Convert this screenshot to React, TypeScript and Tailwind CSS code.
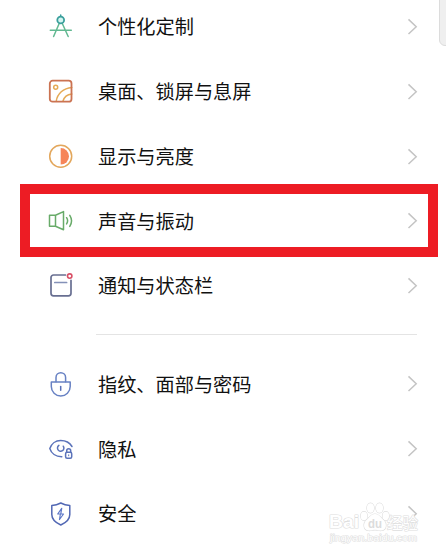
import React from "react";

interface SettingItem {
  label: string;
  icon: React.ReactNode;
  highlighted?: boolean;
}

const Icon = ({ children }: { children: React.ReactNode }) => (
  <svg
    viewBox="0 0 26 26"
    fill="none"
    strokeWidth="1.5"
    strokeLinecap="round"
    strokeLinejoin="round"
    className="h-[26px] w-[26px] shrink-0"
  >
    {children}
  </svg>
);

const CompassIcon = () => (
  <Icon>
    <path d="M11.2 9.5 5.6 22.5M14.3 9.5l5.9 13M2.3 16.3h21" stroke="#62b992" />
    <path d="M12.7 1v1.4" stroke="#3a9f9c" />
    <circle cx="12.7" cy="6" r="3.4" stroke="#3a9f9c" strokeWidth="1.8" fill="#d5f5f1" />
  </Icon>
);

const WallpaperIcon = () => (
  <Icon>
    <circle cx="7.7" cy="8.2" r="2" stroke="#e5aa55" />
    <path d="M8.3 22c1-7 7-13 15.5-13.6M15 22c1-3.6 4.5-6.5 8.8-7" stroke="#e5aa55" />
    <rect x="1.8" y="1.7" width="21.7" height="21" rx="2.8" stroke="#cb7352" strokeWidth="1.8" />
  </Icon>
);

const BrightnessIcon = () => (
  <Icon>
    <circle cx="12.7" cy="12.3" r="11" stroke="#e3a75c" />
    <path d="M12.7 4a8.3 8.3 0 0 1 0 16.6z" fill="#f68559" />
  </Icon>
);

const SoundIcon = () => (
  <Icon>
    <path d="M7.5 7.3h-6v10.9h6M7.5 7.3v10.9l8 3.5V3.6z" stroke="#68ab69" />
    <path d="M18.6 9.7c1.3 2 1.3 4.2 0 6.2M21.8 7.3c2.1 3.3 2.1 7.8 0 11.1" stroke="#68ab69" />
  </Icon>
);

const NotificationIcon = () => (
  <Icon>
    <path
      d="M17.5 2h-12A2.5 2.5 0 0 0 3 4.5v15.8a2.5 2.5 0 0 0 2.5 2.5h15a2.5 2.5 0 0 0 2.5-2.5v-13"
      stroke="#686f91"
      strokeWidth="1.7"
    />
    <path d="M6.8 9.5h11.8" stroke="#8491b8" strokeWidth="1.7" />
    <circle cx="21.7" cy="3.1" r="2.2" stroke="#d94f66" strokeWidth="1.6" />
  </Icon>
);

const LockIcon = () => (
  <Icon>
    <path d="M8 10.8V6.5a4.8 4.8 0 0 1 9.6 0v4.3" stroke="#6781c3" />
    <path d="M3.3 11h18.9v4.6a9.45 9.45 0 0 1-18.9 0z" stroke="#6781c3" />
    <path d="M12.7 15.5v3.7" stroke="#5870b8" />
  </Icon>
);

const PrivacyIcon = () => (
  <Icon>
    <path d="M24 10.5C21.8 6.8 17.5 4.5 12.7 4.5 7.5 4.5 3.3 8 1.8 12.5c1.5 4.8 6 8.3 12 8.2" stroke="#5b73ba" />
    <path d="M15.3 10.2a3.2 3.2 0 1 1-4.4-.8" stroke="#5b73ba" />
    <path d="M18.7 16.2v-1.5a2 2 0 0 1 4 0v1.5" stroke="#5b73ba" />
    <rect x="17.6" y="16.3" width="6.1" height="6" rx="1.5" stroke="#5b73ba" />
    <path d="M20.7 18.8v1" stroke="#5b73ba" strokeWidth="1" />
  </Icon>
);

const SecurityIcon = () => (
  <Icon>
    <path
      d="M12.8 2c2.8 1.5 5.7 2.3 9 2.5v9c0 5-4.5 8.500-9 10.500-4.500-2-9-5.500-9-10.500v-9c3.300-.2 6.200-1 9-2.500z"
      stroke="#5268b4"
    />
    <path d="M13.7 7.3 9.7 13h5.8l-4 5.5M13.7 7.3l-.9 5.5M12.4 13l-.9 5.5" stroke="#5e78c8" strokeWidth="1.2" />
  </Icon>
);

const Chevron = () => (
  <svg viewBox="0 0 11 18" fill="none" className="h-[18px] w-[11px]">
    <path d="m1.5 1.4 7.7 7.3-7.7 7.3" stroke="#c4c4c4" strokeWidth="1.5" />
  </svg>
);

const generalItems: SettingItem[] = [
  { label: "个性化定制", icon: <CompassIcon /> },
  { label: "桌面、锁屏与息屏", icon: <WallpaperIcon /> },
  { label: "显示与亮度", icon: <BrightnessIcon /> },
  { label: "声音与振动", icon: <SoundIcon />, highlighted: true },
  { label: "通知与状态栏", icon: <NotificationIcon /> },
];

const securityItems: SettingItem[] = [
  { label: "指纹、面部与密码", icon: <LockIcon /> },
  { label: "隐私", icon: <PrivacyIcon /> },
  { label: "安全", icon: <SecurityIcon /> },
];

const SettingRow = ({ label, icon, highlighted }: SettingItem) => (
  <li className="relative flex h-[64.75px] items-center pr-[28px] pl-12">
    {icon}
    <span className="ml-6 flex-1 text-[19.2px] leading-none text-[#111]">{label}</span>
    <Chevron />
    {highlighted && (
      <div className="absolute -top-[5px] right-2 left-5 h-[73px] border-[10px] border-[#ed1c24]" />
    )}
  </li>
);

const Watermark = () => (
  <svg
    viewBox="0 0 100 48"
    className="absolute top-[499px] left-[327px] h-12 w-[100px]"
    fill="#fff"
    stroke="#dedede"
    strokeWidth="1.2"
    strokeLinejoin="round"
    paintOrder="stroke"
    fontFamily='"Liberation Sans", "Noto Sans CJK SC", sans-serif'
  >
    <text x="2" y="29" fontSize="18" fontWeight="700" textLength="30" lengthAdjust="spacingAndGlyphs">
      Bai
    </text>
    <ellipse cx="37" cy="17" rx="3.3" ry="4.3" />
    <ellipse cx="43.5" cy="9" rx="3.6" ry="4.8" />
    <ellipse cx="52.5" cy="9" rx="3.6" ry="4.8" />
    <ellipse cx="58.8" cy="17" rx="3.3" ry="4.3" />
    <path d="M48 15c4 0 5.5 3.5 8.5 6 3.5 3 3.5 10-2 10.5-3 .3-4-.7-6.5-.7s-3.5 1-6.5.7c-5.500-.5-5.500-7.500-2-10.500 3-2.500 4.500-6 8.500-6z" />
    <text
      x="41"
      y="28.5"
      fontSize="12"
      fontWeight="700"
      fill="#dcdcdc"
      stroke="none"
      textLength="14"
      lengthAdjust="spacingAndGlyphs"
    >
      du
    </text>
    <text x="60" y="29.5" fontSize="15.5" textLength="31">经验</text>
    <text x="3" y="41.5" fontSize="9" strokeWidth="1" textLength="87" lengthAdjust="spacingAndGlyphs">
      jingyan.baidu.com
    </text>
  </svg>
);

export default function App() {
  return (
    <main className="relative h-[555px] w-[446px] overflow-hidden bg-white font-['Noto_Sans_CJK_SC',sans-serif]">
      <ul className="-mt-[5.375px]">
        {generalItems.map((item) => (
          <SettingRow key={item.label} {...item} />
        ))}
      </ul>
      <hr className="mt-[15.625px] mr-[29px] mb-[17px] ml-24 border-[#e4e4e4]" />
      <ul>
        {securityItems.map((item) => (
          <SettingRow key={item.label} {...item} />
        ))}
      </ul>
      <Watermark />
      <div className="absolute -top-2 -right-2 h-[54px] w-[15px] rounded-md border border-[#dcdcdc] bg-[#efefef]" />
    </main>
  );
}
